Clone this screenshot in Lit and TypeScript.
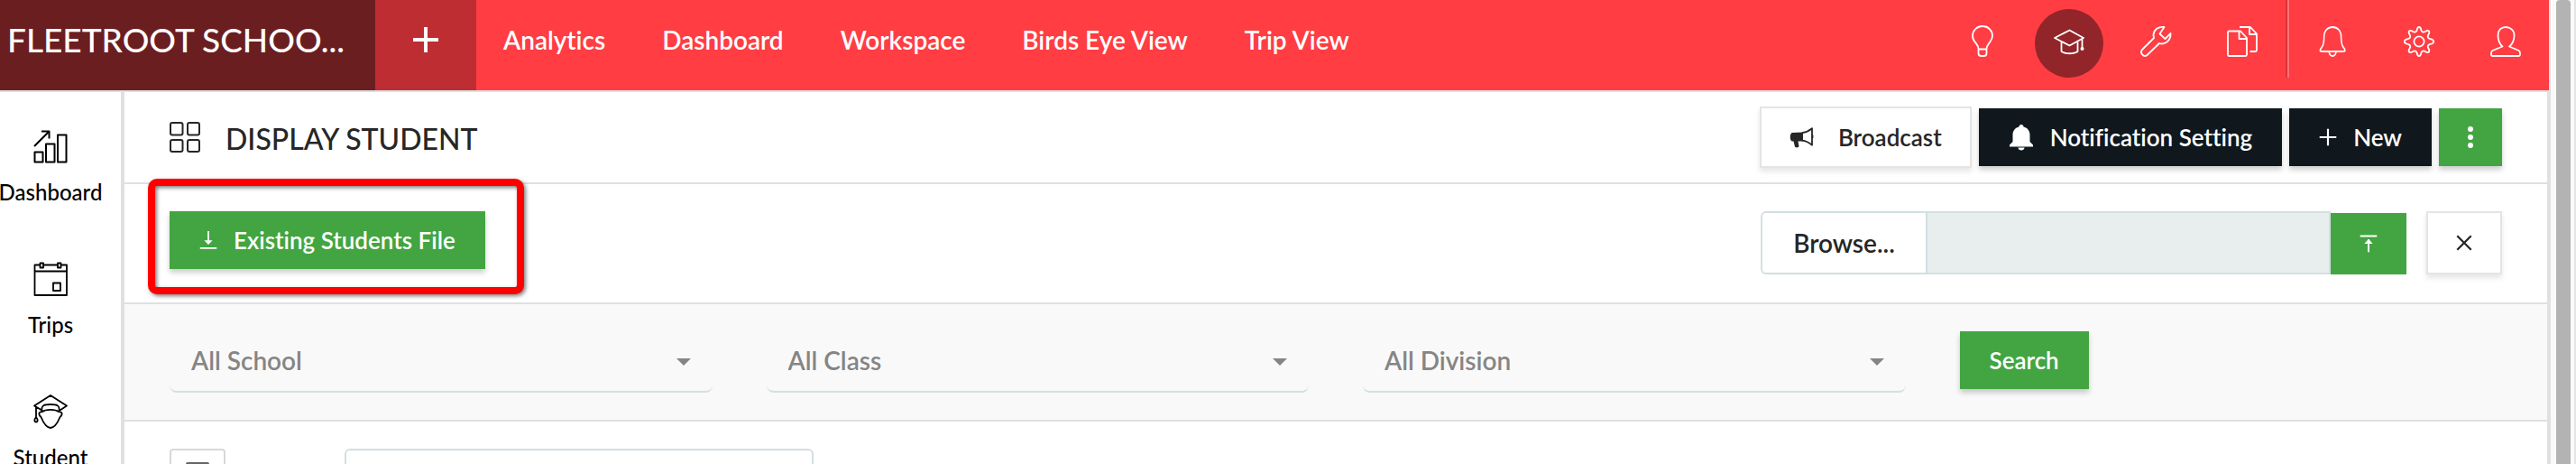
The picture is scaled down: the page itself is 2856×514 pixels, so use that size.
import { LitElement, html, css, svg, nothing } from "lit";
import { customElement, property } from "lit/decorators.js";

const icons = {
  plus: svg`<path d="M14 0v28M0 14h28" stroke-width="4"/>`,
  plusThin: svg`<path d="M14 1v26M1 14h26" stroke-width="3"/>`,
  bulb: svg`<path d="M12.5 26v-1c0-3-2-5-3.5-7a11 11 0 0 1-3-7.500a11 10.500 0 0 1 22 0c0 3-1.500 5.500-3 7.500c-1.500 2-3.500 4-3.500 7v1M12.500 25.500h9M12.500 25.500v4.500c0 2 1.500 3 3 3h3c1.500 0 3-1 3-3v-4.500" stroke-width="1.8"/>`,
  cap: svg`<path d="M1 13L17.500 4.500L33 13L17.500 21.500ZM8.500 17.500v10.500c4 3 14 3 18 0v-10.500M31.500 14v10" stroke-width="1.800"/><circle cx="31.500" cy="25" r="2" fill="currentColor" stroke="none"/>`,
  wrench: svg`<path d="M26.500 1C20 0 15 4 14.500 9.500c0 1.500.3 2.500.6 3.500L2 26c-3 3.500 1.500 9 5.500 6L21 19c6 2 13-3 12.500-11l-6 6l-6-5.500Z" stroke-width="1.8"/>`,
  docs: svg`<path d="M2 5.500h13l7 7.500v18.500c0 1-.5 1.500-1.500 1.500h-18c-1 0-1.500-.5-1.500-1.500v-25ZM13.500 6v8h8M14 1h12l7 7.500v18c0 1-.5 1.500-1.500 1.500h-6M25 1.500v7.500h8" stroke-width="1.8"/>`,
  bell: svg`<path d="M7 28h20c4 0 6.500 0 6-1c0-1.500-.5-2-2-3.500c-3-3-3-8-3-12C28 5 23.500 1 17 1S6 5 6 11.500c0 4 0 9-3 12c-1.500 1.500-2 2-2 3.500c-.5 1 2 1 6 1M12.500 28c0 3 2 5 4.500 5s4.500-2 4.500-5" stroke-width="1.8" transform="translate(2.500 0) scale(.86 1)"/>`,
  gear: svg`<path d="M14.600 4.500c.4-2 .6-3.500 2.400-3.500s2 1.500 2.400 3.500c.5 2 2.500 2.700 4.200 1.600c1.700-1 3-2 4.300-.7s.3 2.600-.7 4.300c-1 1.700-.4 3.700 1.600 4.200c2 .4 4.200.6 4.200 2.600v1c0 2-2.200 2.200-4.200 2.600c-2 .5-2.600 2.500-1.600 4.200c1 1.700 2 3 .7 4.300s-2.600.3-4.300-.7c-1.700-1.100-3.700-.4-4.200 1.600c-.4 2-.6 3.500-2.400 3.500s-2-1.500-2.400-3.500c-.5-2-2.500-2.700-4.200-1.600c-1.700 1-3 2-4.300.7s-.3-2.600.7-4.300c1-1.700.4-3.700-1.600-4.200c-2-.4-4.200-.6-4.200-2.600v-1c0-2 2.200-2.200 4.200-2.600c2-.5 2.600-2.500 1.600-4.200c-1-1.700-2-3-.7-4.300s2.600-.3 4.300.7c1.700 1.100 3.700.4 4.200-1.600Z" stroke-width="1.8"/><circle cx="17" cy="17" r="5.600" stroke-width="1.800"/>`,
  user: svg`<path d="M13.500 22.500c-3.500-3-5-7-5-12.500c0-5.500 3.500-9 8.500-9s9.500 3.500 9.500 9c0 5.500-1.500 9.500-5.500 12.500l10.500 4.500c1.500.7 1.500 1.500 1.500 3v1.500c0 1-.5 1.500-1.500 1.500h-29c-1 0-1.500-.5-1.500-1.500v-1.500c0-1.500 0-2.300 1.500-3Z" stroke-width="1.800"/>`,
  chart: svg`<path d="M1.500 25.500h9v11h-9ZM14 16.500h9.500v20h-9.500ZM27 6.500h9.500v30h-9.500Z" stroke-width="2"/><path d="M1 19L17 3M9 2.500h8.500v8" stroke-width="2"/>`,
  calendar: svg`<path d="M7.500 3.500h-6v33.500h35.500v-33.500h-6M11.500 3.500h15M1.500 10.500h35.500M7.500 1.500h3.500v5h-3.500ZM27 1.500h3.500v5h-3.500ZM22 23.500h8v8.500h-8Z" stroke-width="1.800"/>`,
  student: svg`<path d="M9.500 17.500L1 12.500L19 1L37 12.500L29.500 17.500M9.500 19c-1-7 2-8 9.500-8s10.500 1 9.500 8M9 19.500c5-3.500 15-3.500 20 0M9 19c-4 1-3 4-.5 6c2.500 6 5.500 12 10.500 12s8-6 10.500-12c2.500-2 3.500-5-.5-6M3 14v11M3 25c-2.500 3-2 5.500 0 5.500s2.500-2.500 0-5.500" stroke-width="1.800"/>`,
  grid: svg`<rect x="1" y="1" width="13.500" height="13.500" rx="2" stroke-width="2"/><rect x="20" y="1" width="13" height="13.500" rx="2" stroke-width="2"/><rect x="1" y="20" width="13.500" height="13" rx="2" stroke-width="2"/><rect x="20" y="20" width="13" height="13" rx="2" stroke-width="2"/>`,
  horn: svg`<path d="M15 8.500L3 9C0 9.500 0 18 3 18.500h1.500l1.500 6c1 1.500 4.500 1 4.500-.5l-1-5.500H15Z" fill="currentColor" stroke="none"/><path d="M14 9.200c4-.5 8-2.500 11-5v18.500c-3-2.500-7-4.500-11-5M25.500 11.500v3.500" stroke-width="1.800"/>`,
  bellSolid: svg`<path d="M14 0c-1.500 0-2.500 1-2.500 2.500C7 3.500 4.500 7 4.500 11.500v7.500L1 22.500v2h26v-2L23.500 19v-7.500C23.500 7 21 3.500 16.500 2.500C16.500 1 15.500 0 14 0ZM10.500 25.500h7c0 4-7 4-7 0Z" fill="currentColor" stroke="none"/>`,
  dots: svg`<g fill="currentColor" stroke="none"><circle cx="14" cy="5" r="3"/><circle cx="14" cy="14" r="3"/><circle cx="14" cy="23" r="3"/></g>`,
  download: svg`<path d="M14 0v20M1 26.500h26" stroke-width="2.500"/><path d="M7.500 14.500h13L14 21Z" fill="currentColor" stroke="none"/>`,
  upload: svg`<path d="M14 27v-20M1 2h26" stroke-width="2.800"/><path d="M7.500 14h13L14 6.500Z" fill="currentColor" stroke="none"/>`,
  close: svg`<path d="M2 2L26 26M26 2L2 26" stroke-width="3.500"/>`,
  table: svg`<rect x="1" y="1" width="24" height="24" rx="1" stroke-width="2"/><path d="M1 9h24M9 9v16"/>`,
};

const sizes: Record<string, number> = {
  bulb: 34, cap: 34, wrench: 34, docs: 34, bell: 34, gear: 34, user: 34,
  chart: 38, calendar: 38, student: 38, grid: 34, table: 26,
};

type IconName = keyof typeof icons;

@customElement("app-icon")
export class AppIcon extends LitElement {
  @property() name: IconName = "plus";

  static styles = css`
    :host { display: block; flex: none; width: 28px; height: 28px; }
    svg { display: block; width: 100%; height: 100%; overflow: visible; }
  `;

  render() {
    const size = sizes[this.name] ?? 28;
    return html`<svg viewBox="0 0 ${size} ${size}" fill="none" stroke="currentColor"
      stroke-linejoin="round" aria-hidden="true">${icons[this.name]}</svg>`;
  }
}

@customElement("app-root")
export class AppRoot extends LitElement {
  private nav = ["Analytics", "Dashboard", "Workspace", "Birds Eye View", "Trip View"];

  private tools: { icon: IconName; label: string; active?: boolean }[] = [
    { icon: "bulb", label: "Tips" },
    { icon: "cap", label: "School", active: true },
    { icon: "wrench", label: "Maintenance" },
    { icon: "docs", label: "Documents" },
  ];

  private account: { icon: IconName; label: string; active?: boolean }[] = [
    { icon: "bell", label: "Alerts" },
    { icon: "gear", label: "Settings" },
    { icon: "user", label: "Profile" },
  ];

  private side: { icon: IconName; label: string }[] = [
    { icon: "chart", label: "Dashboard" },
    { icon: "calendar", label: "Trips" },
    { icon: "student", label: "Student" },
  ];

  private filters = ["All School", "All Class", "All Division"];

  static styles = css`
    :host {
      display: flex;
      height: 100vh;
      overflow: hidden;
      background: #fff;
      color: #262626;
      font: 500 26px/32px Lato, "Open Sans", sans-serif;
      font-variant-ligatures: none;
      --line: #dfe0e1;
      --field: #d3dfe2;
      --green: #42a541;
    }
    * { box-sizing: border-box; }
    button, input, select { font: inherit; font-variant-ligatures: none; color: inherit; margin: 0; border-radius: 0; }
    button { border: 0; padding: 0; background: none; cursor: pointer; white-space: nowrap; }
    a { color: inherit; text-decoration: none; }

    .app { flex: 1; min-width: 0; display: flex; flex-direction: column; }
    .scroll { flex: none; width: 28px; padding: 0 4px 0 6px; background: #fafafa; border-right: 2px solid #e4e4e4; }
    .thumb { height: 100%; background: #b3b3b3; border-radius: 4px 4px 0 0; }

    .header { flex: none; display: flex; height: 102px; background: #ff3d43; color: #fff; border: solid var(--line); border-width: 0 2px 2px 0; }
    .brand { width: 416px; padding: 0 8px 12px; background: #6b1e20; font-size: 37px; display: flex; align-items: center; white-space: nowrap; }
    .add { width: 112px; padding-bottom: 12px; background: #be2d32; display: flex; align-items: center; justify-content: center; }
    .nav { display: flex; align-items: center; gap: 63px; padding: 0 30px 12px; font-size: 28px; font-weight: 600; white-space: nowrap; }
    .tools { display: flex; margin-left: auto; }
    .tool { width: 96px; height: 96px; display: flex; align-items: center; justify-content: center; }
    .disc { width: 76px; height: 76px; padding-bottom: 4px; border-radius: 50%; display: flex; align-items: center; justify-content: center; }
    .disc.active { background: #912529; }
    .disc app-icon { width: 34px; height: 34px; }
    .split { width: 4px; height: 86px; border-left: 2px solid #d9343a; background: #ff7075; }

    .body { flex: 1; min-height: 0; display: flex; }
    .side { flex: none; width: 138px; padding-right: 22px; border-right: 4px solid var(--line); color: #000; font-size: 24px; line-height: 28px; overflow: hidden; }
    .side a { height: 147px; padding-top: 41px; display: flex; flex-direction: column; align-items: center; gap: 18px; }
    .side app-icon { width: 38px; height: 38px; }
    .main { flex: 1; min-width: 0; border-right: 4px solid var(--line); }

    .row { display: flex; padding: 0 50px; border-bottom: 2px solid var(--line); }
    .title-row { height: 102px; align-items: center; gap: 8px; }
    .title-row > app-icon { width: 34px; height: 34px; }
    h1 { margin: 0 auto 0 20px; padding-top: 4px; font-size: 32px; line-height: 40px; font-weight: 500; }

    .btn { display: flex; align-items: center; justify-content: center; height: 64px; padding: 0 33px; gap: 18px; color: #fff; font-weight: 600; box-shadow: 0 4px 6px rgba(0, 0, 0, 0.2); }
    .btn app-icon { width: 28px; height: 28px; }
    .btn app-icon.small { width: 20px; height: 20px; }
    .green { background: var(--green); }
    .dark { background: #10181d; }
    .light { height: 68px; background: #fff; color: #262626; border: 2px solid #e4e4e4; padding: 0 31px; gap: 26px; box-shadow: 0 4px 6px rgba(0, 0, 0, 0.1); }
    .icon-only { width: 70px; padding: 0; }

    .file-row { padding-top: 30px; padding-bottom: 31px; justify-content: space-between; align-items: flex-start; }
    .marked { position: relative; }
    .mark { position: absolute; inset: -36px -43px -28px -24px; border: 8px solid #f00; border-radius: 10px; pointer-events: none; filter: drop-shadow(2px 2px 2px rgba(0, 0, 0, 0.5)); }
    .upload { display: flex; gap: 22px; }
    .picker { display: flex; height: 70px; width: 716px; }
    .browse { width: 185px; flex: none; background: #fff; border: 2px solid var(--field); border-radius: 6px 0 0 6px; font-size: 28px; font-weight: 600; }
    .file { flex: 1; min-width: 0; background: #e8eeee; border: 2px solid var(--field); border-left: 0; outline: 0; padding: 0 20px; }
    .picker .btn { width: 84px; height: 68px; margin-top: 2px; padding: 0; box-shadow: none; }
    .close { width: 84px; height: 70px; padding: 0; }
    .btn.close app-icon { width: 18px; height: 18px; }

    .filter-row { display: grid; grid-template-columns: repeat(4, 1fr); gap: 60px; padding: 30px 50px; background: #f9f9f9; align-items: start; justify-items: start; }
    .select { display: grid; width: 100%; align-items: center; color: #858585; }
    .select select { grid-area: 1 / 1; width: 100%; height: 68px; padding: 0 24px 2px; appearance: none; background: none; border: 0 solid var(--field); border-bottom-width: 2px; border-radius: 8px; outline: 0; font-size: 28px; font-weight: 600; }
    .select::after { content: ""; grid-area: 1 / 1; justify-self: end; margin-right: 24px; border: solid transparent; border-width: 8px 8px 0; border-top-color: #858585; pointer-events: none; }

    .list-row { padding: 30px 50px; gap: 132px; display: flex; }
    .view { width: 62px; height: 68px; border: 2px solid #d8d8d8; border-radius: 4px; display: flex; padding: 13px 16px; color: #666; }
    .view app-icon { width: 26px; height: 26px; }
    .query { width: 520px; height: 68px; padding: 0 20px; border: 2px solid var(--field); border-radius: 6px; background: #fff; outline: 0; }
  `;

  private tool(t: { icon: IconName; label: string; active?: boolean }) {
    return html`<button class="tool" aria-label=${t.label}>
      <span class="disc ${t.active ? "active" : ""}"><app-icon name=${t.icon}></app-icon></span>
    </button>`;
  }

  private button(kind: string, icon: IconName, text: string, size = "", label = "") {
    return html`<button class="btn ${kind}" aria-label=${label || nothing}>
      <app-icon class=${size} name=${icon}></app-icon>${text}
    </button>`;
  }

  render() {
    return html`
      <div class="app">
        <header class="header">
          <div class="brand">FLEETROOT SCHOO...</div>
          <button class="add" aria-label="Add"><app-icon name="plus"></app-icon></button>
          <nav class="nav">${this.nav.map((n) => html`<a href="#">${n}</a>`)}</nav>
          <div class="tools">
            ${this.tools.map((t) => this.tool(t))}
            <span class="split"></span>
            ${this.account.map((t) => this.tool(t))}
          </div>
        </header>
        <div class="body">
          <nav class="side">
            ${this.side.map((s) => html`<a href="#"><app-icon name=${s.icon}></app-icon><span>${s.label}</span></a>`)}
          </nav>
          <main class="main">
            <div class="row title-row">
              <app-icon name="grid"></app-icon>
              <h1>DISPLAY STUDENT</h1>
              ${this.button("light", "horn", "Broadcast")}
              ${this.button("dark", "bellSolid", "Notification Setting")}
              ${this.button("dark", "plusThin", "New", "small")}
              ${this.button("green icon-only", "dots", "", "", "More")}
            </div>
            <div class="row file-row">
              <div class="marked">
                ${this.button("green", "download", "Existing Students File", "small")}
                <span class="mark"></span>
              </div>
              <div class="upload">
                <div class="picker">
                  <button class="browse">Browse...</button>
                  <input class="file" type="text" aria-label="Selected file" readonly />
                  ${this.button("green", "upload", "", "small", "Upload")}
                </div>
                ${this.button("light close", "close", "", "", "Close")}
              </div>
            </div>
            <div class="row filter-row">
              ${this.filters.map((f) => html`<label class="select"><select aria-label=${f}><option>${f}</option></select></label>`)}
              <button class="btn green">Search</button>
            </div>
            <div class="list-row">
              <button class="view" aria-label="Table view"><app-icon name="table"></app-icon></button>
              <input class="query" type="text" aria-label="Search students" />
            </div>
          </main>
        </div>
      </div>
      <div class="scroll"><div class="thumb"></div></div>
    `;
  }
}
